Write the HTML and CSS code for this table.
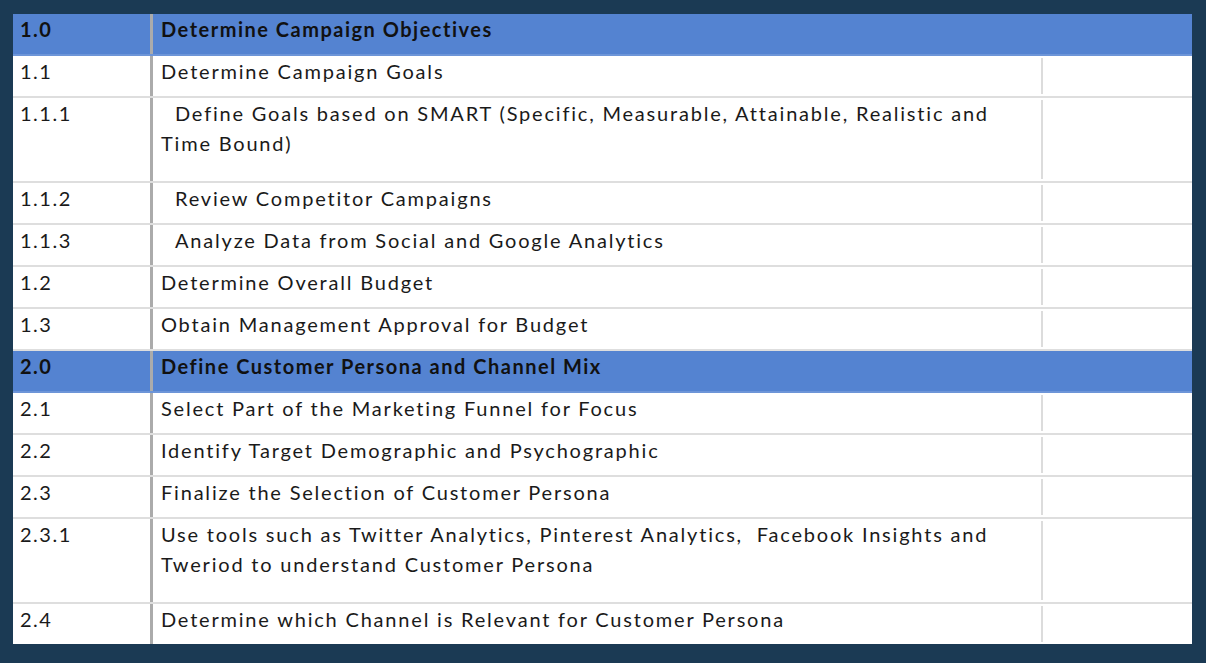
FILE: index.html
```html
<!DOCTYPE html>
<html lang="en">
  <head>
    <meta charset="UTF-8" />
    <title>Campaign Plan</title>
    <link rel="stylesheet" href="styles.css">
  </head>
  <body>
    <div class="plan">
      <div class="row head">
        <div class="num">1.0</div>
        <div class="task">Determine Campaign Objectives</div>
      </div>
      <div class="row">
        <div class="num">1.1</div>
        <div class="task">Determine Campaign Goals</div>
        <div class="extra"></div>
      </div>
      <div class="row tall">
        <div class="num">1.1.1</div>
        <div class="task sub">Define Goals based on SMART (Specific, Measurable, Attainable, Realistic and Time Bound)</div>
        <div class="extra"></div>
      </div>
      <div class="row">
        <div class="num">1.1.2</div>
        <div class="task sub">Review Competitor Campaigns</div>
        <div class="extra"></div>
      </div>
      <div class="row">
        <div class="num">1.1.3</div>
        <div class="task sub">Analyze Data from Social and Google Analytics</div>
        <div class="extra"></div>
      </div>
      <div class="row">
        <div class="num">1.2</div>
        <div class="task">Determine Overall Budget</div>
        <div class="extra"></div>
      </div>
      <div class="row">
        <div class="num">1.3</div>
        <div class="task">Obtain Management Approval for Budget</div>
        <div class="extra"></div>
      </div>
      <div class="row head">
        <div class="num">2.0</div>
        <div class="task">Define Customer Persona and Channel Mix</div>
      </div>
      <div class="row">
        <div class="num">2.1</div>
        <div class="task">Select Part of the Marketing Funnel for Focus</div>
        <div class="extra"></div>
      </div>
      <div class="row">
        <div class="num">2.2</div>
        <div class="task">Identify Target Demographic and Psychographic</div>
        <div class="extra"></div>
      </div>
      <div class="row">
        <div class="num">2.3</div>
        <div class="task">Finalize the Selection of Customer Persona</div>
        <div class="extra"></div>
      </div>
      <div class="row tall">
        <div class="num">2.3.1</div>
        <div class="task">Use tools such as Twitter Analytics, Pinterest Analytics,&nbsp; Facebook Insights and Tweriod to understand Customer Persona</div>
        <div class="extra"></div>
      </div>
      <div class="row">
        <div class="num">2.4</div>
        <div class="task">Determine which Channel is Relevant for Customer Persona</div>
        <div class="extra"></div>
      </div>
    </div>
  </body>
</html>
```

FILE: styles.css
```css
body {
  margin: 0;
  background: #1b3a54;
  font-family: 'Lato', 'Liberation Sans', sans-serif;
  color: #1a1a1a;
  height: 663px;
  box-sizing: border-box;
  padding: 14px 14px 0 13px;
}

.plan {
  background: #fff;
  display: flex;
  flex-direction: column;
}

.row {
  display: flex;
  height: 40px;
  border-bottom: 2px solid #dedede;
}

.row:last-child {
  border-bottom: none;
}

.row.tall {
  height: 83px;
}

.row.head {
  background: #5483d1;
  font-weight: 700;
  color: #111;
  border-bottom-color: #6d95d8;
}

.num {
  width: 130px;
  padding: 0 0 0 7px;
  border-right: 3px solid #ababab;
  font-size: 20px;
  line-height: 30px;
  letter-spacing: 1.5px;
}

.task {
  flex: 1;
  padding: 0 28px 0 8px;
  font-size: 20px;
  line-height: 30px;
  letter-spacing: 1.8px;
}

.head .task {
  letter-spacing: 1.5px;
}

.task.sub {
  text-indent: 14px;
}

.extra {
  width: 149px;
  margin: 2px 0;
  border-left: 2px solid #dcdcdc;
}
```
